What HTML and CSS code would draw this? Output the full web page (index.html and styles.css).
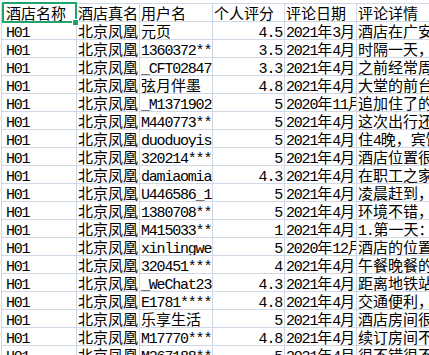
FILE: index.html
```
<!DOCTYPE html>
<html lang="zh-CN">
<head>
<meta charset="utf-8">
<title>酒店评论</title>
<link rel="stylesheet" href="styles.css">
</head>
<body>
<div class="sheet">
  <div class="c a">酒店名称</div><div class="c">酒店真名</div><div class="c">用户名</div><div class="c">个人评分</div><div class="c">评论日期</div><div class="c">评论详情</div>

  <div class="c a"><span class="l">H01</span></div><div class="c">北京凤凰</div><div class="c">元页</div><div class="c r"><span class="l">4.5</span></div><div class="c"><span class="l">2021</span>年<span class="l">3</span>月</div><div class="c">酒店在广安门附近，交通方便</div>
  <div class="c a"><span class="l">H01</span></div><div class="c">北京凤凰</div><div class="c"><span class="l">1360372***</span></div><div class="c r"><span class="l">3.5</span></div><div class="c"><span class="l">2021</span>年<span class="l">4</span>月</div><div class="c">时隔一天，再次入住</div>
  <div class="c a"><span class="l">H01</span></div><div class="c">北京凤凰</div><div class="c"><span class="l">_CFT0284759</span></div><div class="c r"><span class="l">3.3</span></div><div class="c"><span class="l">2021</span>年<span class="l">4</span>月</div><div class="c">之前经常周末来住</div>
  <div class="c a"><span class="l">H01</span></div><div class="c">北京凤凰</div><div class="c">弦月伴墨</div><div class="c r"><span class="l">4.8</span></div><div class="c"><span class="l">2021</span>年<span class="l">4</span>月</div><div class="c">大堂的前台很热情</div>
  <div class="c a"><span class="l">H01</span></div><div class="c">北京凤凰</div><div class="c"><span class="l">_M13719028</span></div><div class="c r"><span class="l">5</span></div><div class="c"><span class="l">2020</span>年<span class="l">11</span>月</div><div class="c">追加住了的第二晚</div>
  <div class="c a"><span class="l">H01</span></div><div class="c">北京凤凰</div><div class="c"><span class="l">M440773***</span></div><div class="c r"><span class="l">5</span></div><div class="c"><span class="l">2021</span>年<span class="l">4</span>月</div><div class="c">这次出行还是选择</div>
  <div class="c a"><span class="l">H01</span></div><div class="c">北京凤凰</div><div class="c"><span class="l">duoduoyishi</span></div><div class="c r"><span class="l">5</span></div><div class="c"><span class="l">2021</span>年<span class="l">4</span>月</div><div class="c">住<span class="l">4</span>晚，宾馆服务</div>
  <div class="c a"><span class="l">H01</span></div><div class="c">北京凤凰</div><div class="c"><span class="l">320214****</span></div><div class="c r"><span class="l">5</span></div><div class="c"><span class="l">2021</span>年<span class="l">4</span>月</div><div class="c">酒店位置很方便</div>
  <div class="c a"><span class="l">H01</span></div><div class="c">北京凤凰</div><div class="c"><span class="l">damiaomiao</span></div><div class="c r"><span class="l">4.3</span></div><div class="c"><span class="l">2021</span>年<span class="l">4</span>月</div><div class="c">在职工之家附近</div>
  <div class="c a"><span class="l">H01</span></div><div class="c">北京凤凰</div><div class="c"><span class="l">U446586_12</span></div><div class="c r"><span class="l">5</span></div><div class="c"><span class="l">2021</span>年<span class="l">4</span>月</div><div class="c">凌晨赶到，前台</div>
  <div class="c a"><span class="l">H01</span></div><div class="c">北京凤凰</div><div class="c"><span class="l">1380708***</span></div><div class="c r"><span class="l">5</span></div><div class="c"><span class="l">2021</span>年<span class="l">4</span>月</div><div class="c">环境不错，服务</div>
  <div class="c a"><span class="l">H01</span></div><div class="c">北京凤凰</div><div class="c"><span class="l">M415033***</span></div><div class="c r"><span class="l">1</span></div><div class="c"><span class="l">2021</span>年<span class="l">4</span>月</div><div class="c"><span class="l">1.</span>第一天：入住</div>
  <div class="c a"><span class="l">H01</span></div><div class="c">北京凤凰</div><div class="c"><span class="l">xinlingwei</span></div><div class="c r"><span class="l">5</span></div><div class="c"><span class="l">2020</span>年<span class="l">12</span>月</div><div class="c">酒店的位置很好</div>
  <div class="c a"><span class="l">H01</span></div><div class="c">北京凤凰</div><div class="c"><span class="l">320451****</span></div><div class="c r"><span class="l">4</span></div><div class="c"><span class="l">2021</span>年<span class="l">4</span>月</div><div class="c">午餐晚餐的菜品</div>
  <div class="c a"><span class="l">H01</span></div><div class="c">北京凤凰</div><div class="c"><span class="l">_WeChat2345</span></div><div class="c r"><span class="l">4.3</span></div><div class="c"><span class="l">2021</span>年<span class="l">4</span>月</div><div class="c">距离地铁站很近</div>
  <div class="c a"><span class="l">H01</span></div><div class="c">北京凤凰</div><div class="c"><span class="l">E1781*****</span></div><div class="c r"><span class="l">4.8</span></div><div class="c"><span class="l">2021</span>年<span class="l">4</span>月</div><div class="c">交通便利，出行</div>
  <div class="c a"><span class="l">H01</span></div><div class="c">北京凤凰</div><div class="c">乐享生活</div><div class="c r"><span class="l">5</span></div><div class="c"><span class="l">2021</span>年<span class="l">4</span>月</div><div class="c">酒店房间很干净</div>
  <div class="c a"><span class="l">H01</span></div><div class="c">北京凤凰</div><div class="c"><span class="l">M17770****</span></div><div class="c r"><span class="l">4.8</span></div><div class="c"><span class="l">2021</span>年<span class="l">4</span>月</div><div class="c">续订房间不用换</div>
  <div class="c a"><span class="l">H01</span></div><div class="c">北京凤凰</div><div class="c"><span class="l">M267188***</span></div><div class="c r"><span class="l">5</span></div><div class="c"><span class="l">2021</span>年<span class="l">4</span>月</div><div class="c">很不错很不错</div>
</div>
<div class="sel"></div>
<div class="handle"></div>
</body>
</html>
```

FILE: styles.css
```
html, body {
  margin: 0;
  padding: 0;
  overflow: hidden;
  background: #fff;
  width: 429px;
  height: 355px;
}

.sheet {
  display: grid;
  grid-template-columns: 74px 62px 72px 71px 71px 140px;
  grid-auto-rows: 17px;
  gap: 1px;
  padding: 1px;
  margin: 3px 0 0 1px;
  width: max-content;
  background: #d0d7e5;
}

.c {
  background: #fff;
  overflow: hidden;
  white-space: nowrap;
  padding: 0 2px 0 1px;
  font-family: "Noto Sans CJK SC", sans-serif;
  font-size: 15px;
  line-height: 17px;
  color: #000;
}

.a {
  padding-left: 4px;
}

.r {
  text-align: right;
  padding-right: 2px;
}

.l {
  font-family: "Liberation Mono", monospace;
  font-size: 15px;
  letter-spacing: -1.2px;
}

.sel {
  position: absolute;
  left: 2px;
  top: 2px;
  width: 71px;
  height: 17px;
  border: 2px solid #1fa46c;
}

.handle {
  position: absolute;
  left: 72px;
  top: 19px;
  width: 5px;
  height: 5px;
  background: #1fa46c;
  border: 1px solid #fff;
}
```
